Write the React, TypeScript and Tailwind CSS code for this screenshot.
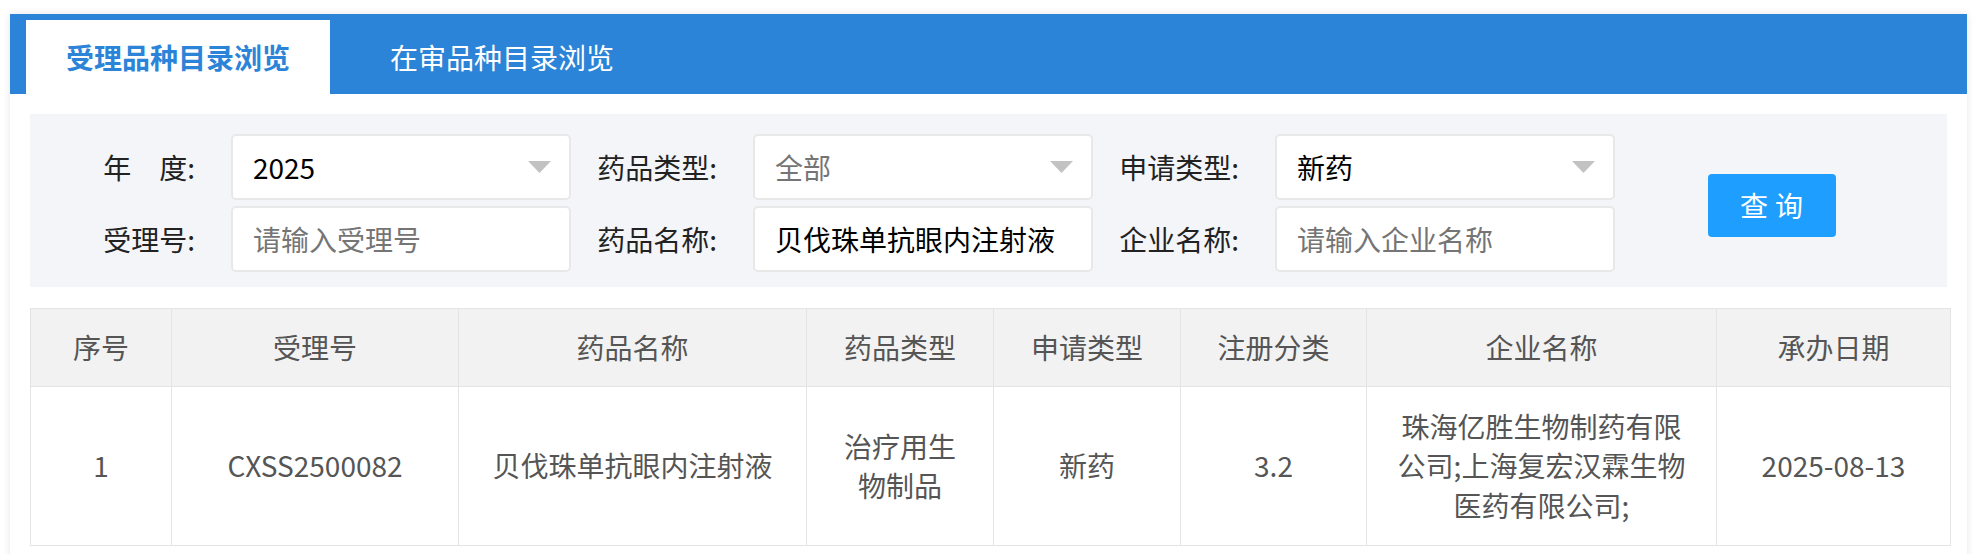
import React from 'react';

const FONT = 'font-["Microsoft_YaHei","Noto_Sans_CJK_SC",sans-serif]';

const rows = [
  {
    no: '1',
    acceptNo: 'CXSS2500082',
    drugName: '贝伐珠单抗眼内注射液',
    drugType: '治疗用生物制品',
    applyType: '新药',
    category: '3.2',
    company: '珠海亿胜生物制药有限公司;上海复宏汉霖生物医药有限公司;',
    date: '2025-08-13',
  },
];

const Caret = () => (
  <svg width="23" height="12" viewBox="0 0 23 12" className="shrink-0">
    <path d="M0 0 L23 0 L11.5 12 Z" fill="#c2c2c2" />
  </svg>
);

const Label: React.FC<{ children: React.ReactNode }> = ({ children }) => (
  <div className="flex items-center justify-end pr-[36px] text-[#222]">{children}</div>
);

const SelectBox: React.FC<{ value: string; muted?: boolean }> = ({ value, muted }) => (
  <div className="flex h-[66px] items-center justify-between rounded-[5px] border-2 border-[#e8e8e8] bg-white pl-[20px] pr-[18px]">
    <span className={muted ? 'text-[#757575]' : 'text-black'}>{value}</span>
    <Caret />
  </div>
);

const TextBox: React.FC<{ value?: string; placeholder?: string }> = ({ value, placeholder }) => (
  <input
    readOnly
    value={value ?? ''}
    placeholder={placeholder}
    className="h-[66px] w-full rounded-[5px] border-2 border-[#e8e8e8] bg-white pl-[20px] text-black outline-none placeholder:text-[#757575]"
  />
);

export default function App() {
  return (
    <div className={`min-h-screen bg-white px-[10px] pt-[14px] text-[28px] ${FONT}`}>
      <div className="bg-white pb-[40px] shadow-[0_0_8px_rgba(0,0,0,0.1)]">
        {/* tabs */}
        <div className="flex h-[80px] items-end bg-[#2b84d7] pl-[16px]">
          <div className="flex h-[74px] w-[304px] items-center justify-center bg-white font-bold text-[#2b84d7]">
            受理品种目录浏览
          </div>
          <div className="ml-[20px] flex h-[74px] w-[304px] items-center justify-center text-white">
            在审品种目录浏览
          </div>
        </div>

        <div className="px-[20px] pt-[20px]">
          {/* search */}
          <div className="flex items-center bg-[#f4f5f9] pb-[15px] pl-[19px] pt-[20px]">
            <div className="grid grid-cols-[182px_340px_182px_340px_182px_340px] gap-y-[6px]">
              <Label>年&#12288;度:</Label>
              <SelectBox value="2025" />
              <Label>药品类型:</Label>
              <SelectBox value="全部" muted />
              <Label>申请类型:</Label>
              <SelectBox value="新药" />

              <Label>受理号:</Label>
              <TextBox placeholder="请输入受理号" />
              <Label>药品名称:</Label>
              <TextBox value="贝伐珠单抗眼内注射液" />
              <Label>企业名称:</Label>
              <TextBox placeholder="请输入企业名称" />
            </div>
            <button className="ml-[93px] mt-[4px] h-[63px] w-[128px] rounded-[4px] bg-[#1e9fff] pl-[6px] tracking-[0.25em] text-white">
              查询
            </button>
          </div>

          {/* result table */}
          <table className="mt-[21px] w-full table-fixed border-collapse text-center leading-[1.4] text-[#555]">
            <colgroup>
              <col className="w-[141px]" />
              <col className="w-[287px]" />
              <col className="w-[348px]" />
              <col className="w-[187px]" />
              <col className="w-[187px]" />
              <col className="w-[186px]" />
              <col className="w-[350px]" />
              <col className="w-[234px]" />
            </colgroup>
            <thead>
              <tr className="bg-[#f2f2f2]">
                {['序号', '受理号', '药品名称', '药品类型', '申请类型', '注册分类', '企业名称', '承办日期'].map((h) => (
                  <th key={h} className="border border-[#e4e4e4] px-[25px] py-[19px] font-normal">
                    {h}
                  </th>
                ))}
              </tr>
            </thead>
            <tbody>
              {rows.map((r) => (
                <tr key={r.no}>
                  {[r.no, r.acceptNo, r.drugName, r.drugType, r.applyType, r.category, r.company, r.date].map((c, i) => (
                    <td key={i} className="border border-[#e4e4e4] px-[25px] py-[20px] break-all">
                      {c}
                    </td>
                  ))}
                </tr>
              ))}
            </tbody>
          </table>
        </div>
      </div>
    </div>
  );
}
